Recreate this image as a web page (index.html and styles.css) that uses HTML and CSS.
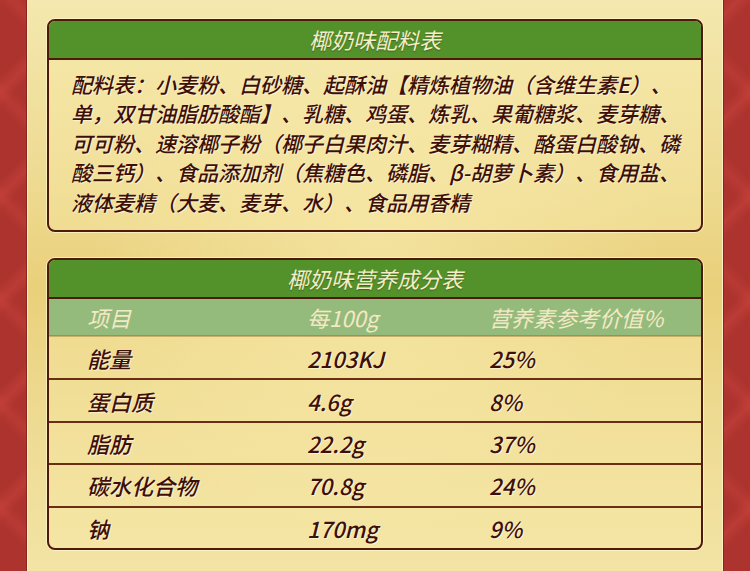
FILE: index.html
```html
<!DOCTYPE html>
<html lang="zh-CN">
<head>
<meta charset="utf-8">
<title>椰奶味配料表</title>
<link rel="stylesheet" href="styles.css">
</head>
<body>
<div class="page">
  <div class="side side-left"></div>
  <main class="panel">
    <section class="box box-ingr">
      <h2 class="box-title">椰奶味配料表</h2>
      <p class="ingr">配料表：小麦粉、白砂糖、起酥油【精炼植物油（含维生素E）、<br>单，双甘油脂肪酸酯】、乳糖、鸡蛋、炼乳、果葡糖浆、麦芽糖、<br>可可粉、速溶椰子粉（椰子白果肉汁、麦芽糊精、酪蛋白酸钠、磷<br>酸三钙）、食品添加剂（焦糖色、磷脂、β-胡萝卜素）、食用盐、<br>液体麦精（大麦、麦芽、水）、食品用香精</p>
    </section>
    <section class="box box-nutri">
      <h2 class="box-title">椰奶味营养成分表</h2>
      <div class="row row-head"><span>项目</span><span>每100g</span><span>营养素参考价值%</span></div>
      <div class="row"><span>能量</span><span>2103KJ</span><span>25%</span></div>
      <div class="row"><span>蛋白质</span><span>4.6g</span><span>8%</span></div>
      <div class="row"><span>脂肪</span><span>22.2g</span><span>37%</span></div>
      <div class="row"><span>碳水化合物</span><span>70.8g</span><span>24%</span></div>
      <div class="row"><span>钠</span><span>170mg</span><span>9%</span></div>
    </section>
  </main>
  <div class="side side-right"></div>
</div>
</body>
</html>
```
FILE: styles.css
```css
* { box-sizing: border-box; }
html, body { margin: 0; padding: 0; }
body {
  width: 750px;
  height: 571px;
  overflow: hidden;
  font-family: "Noto Sans CJK SC", "Noto Sans", sans-serif;
  text-spacing-trim: space-all;
}
.page {
  display: flex;
  width: 750px;
  height: 571px;
}
.side {
  width: 27px;
  flex: none;
  background-color: #ad332e;
  background-image:
    linear-gradient(135deg, transparent 40%, rgba(205,70,62,.45) 50%, transparent 60%),
    linear-gradient(45deg, transparent 40%, rgba(205,70,62,.35) 50%, transparent 60%);
  background-size: 54px 104px;
}
.side-left { border-right: 1px solid #8e2420; background-position: -27px 40px; }
.side-right { border-left: 1px solid #8e2420; background-position: 0 40px; }
.panel {
  flex: 1;
  padding: 19px 20px 0 20px;
  display: flex;
  flex-direction: column;
  gap: 26px;
  background:
    radial-gradient(ellipse 60% 70% at 50% 45%, rgba(250,238,180,.55), rgba(250,238,180,0) 70%),
    linear-gradient(180deg, #f4e8ae 0%, #eedb93 30%, #e9d07b 50%, #eedb93 75%, #f3e4a5 100%);
  box-shadow: inset 1px 0 0 #fbf1c4, inset -1px 0 0 #fbf1c4;
}
.box {
  border: 2px solid #4e1a0c;
  border-radius: 8px;
  overflow: hidden;
  background: rgba(250, 236, 170, .35);
  box-shadow: 0 0 0 1px rgba(255, 246, 205, .7);
}
.box-ingr { height: 213px; }
.box-nutri { height: 292px; }
.box-title {
  margin: 0;
  height: 39px;
  border-bottom: 2px solid #4e1a0c;
  background: #53912a;
  color: #f4edc8;
  font-size: 22px;
  font-weight: 400;
  font-style: italic;
  line-height: 37px;
  text-align: center;
  text-shadow: 0 1px 1px rgba(40, 60, 10, .5);
}
.ingr {
  margin: 0;
  padding: 10px 0 0 22px;
  font-size: 21px;
  font-weight: 500;
  line-height: 29.4px;
  font-style: italic;
  color: #3d0f07;
  white-space: nowrap;
  text-shadow: 0 0 1px #fff6d2, 1px 1px 1px rgba(255, 248, 215, .8);
}
.row {
  display: grid;
  grid-template-columns: 220px 182px 1fr;
  align-items: center;
  padding-left: 38px;
  height: 42.4px;
  border-top: 2px solid #6a2e14;
  font-size: 22px;
  font-weight: 500;
  font-style: italic;
  color: #3d0f07;
  text-shadow: 0 0 1px #fff6d2, 1px 1px 1px rgba(255, 248, 215, .8);
}
.row-head {
  height: 37px;
  border-top: none;
  border-bottom: 1px solid #7aa05e;
  background: #94bb7b;
  color: #f4e9c6;
  font-weight: 400;
  text-shadow: none;
}
.row-head + .row { border-top: 1px solid #c9b06a; }
```
